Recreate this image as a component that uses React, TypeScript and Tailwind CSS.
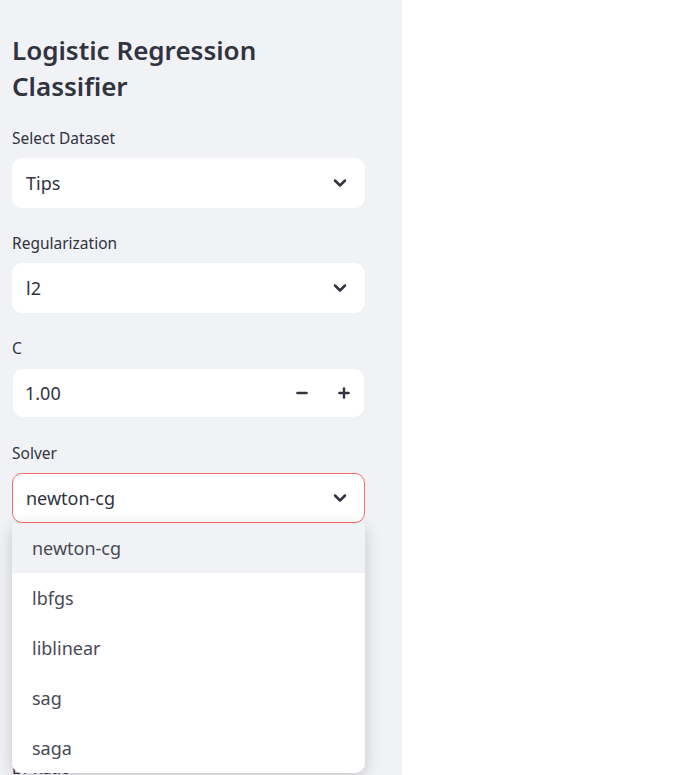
import { ChevronDown, Minus, Plus } from "lucide-react";

const solvers = ["newton-cg", "lbfgs", "liblinear", "sag", "saga"];

function Label({ children }: { children: React.ReactNode }) {
    return <div className="h-5 text-[15.5px] leading-5 text-[#31333f]">{children}</div>;
}

function Select({ value, active }: { value: string; active?: boolean }) {
    return (
        <div
            className={
                active
                    ? "mt-[10px] flex h-[50px] items-center justify-between rounded-[10px] border border-[#f76b6b] bg-white pl-[13px] pr-[14px]"
                    : "mt-[10px] flex h-[50px] items-center justify-between rounded-[10px] border border-white bg-white pl-[13px] pr-[14px]"
            }
        >
            <span className="text-[18px] text-[#31333f]">{value}</span>
            <ChevronDown size={20} strokeWidth={3} className="text-[#31333f]" />
        </div>
    );
}

export default function App() {
    return (
        <div className="flex h-[775px] w-full overflow-hidden bg-white" style={{ fontFamily: "'Noto Sans', sans-serif" }}>
            <div className="relative h-full w-[402px] shrink-0 bg-[#f0f2f6] pl-3 pr-[37px] pt-8">
                <h1 className="text-[26px] font-semibold leading-9 text-[#31333f]">
                    Logistic Regression
                    <br />
                    Classifier
                </h1>

                <div className="mt-6">
                    <Label>Select Dataset</Label>
                    <Select value="Tips" />
                </div>

                <div className="mt-[25px]">
                    <Label>Regularization</Label>
                    <Select value="l2" />
                </div>

                <div className="mt-[25px]">
                    <Label>C</Label>
                    <div className="mx-px mt-[11px] flex h-12 items-center justify-between rounded-[10px] bg-white pl-3 pr-[12px]">
                        <span className="text-[18px] text-[#31333f]">1.00</span>
                        <div className="flex items-center gap-[26px]">
                            <Minus size={16} strokeWidth={3.5} className="text-[#31333f]" />
                            <Plus size={16} strokeWidth={3.5} className="text-[#31333f]" />
                        </div>
                    </div>
                </div>

                <div className="relative mt-[26px]">
                    <Label>Solver</Label>
                    <Select value="newton-cg" active />
                    <div className="absolute left-0 right-0 top-[80px] z-10 overflow-hidden rounded-b-[10px] rounded-t-[4px] bg-white shadow-[0_4px_16px_rgba(0,0,0,0.18)]">
                        {solvers.map((s, i) => (
                            <div
                                key={s}
                                className={
                                    i === 0
                                        ? "flex h-[50px] items-center bg-[#f0f2f6] px-5 text-[18px] text-[#484a55]"
                                        : "flex h-[50px] items-center px-5 text-[18px] text-[#484a55]"
                                }
                            >
                                {s}
                            </div>
                        ))}
                    </div>
                </div>

                <div className="h-[235px]" />

                <div>
                    <Label>L1 Ratio</Label>
                </div>
            </div>
            <div className="flex-1 bg-white" />
        </div>
    );
}
